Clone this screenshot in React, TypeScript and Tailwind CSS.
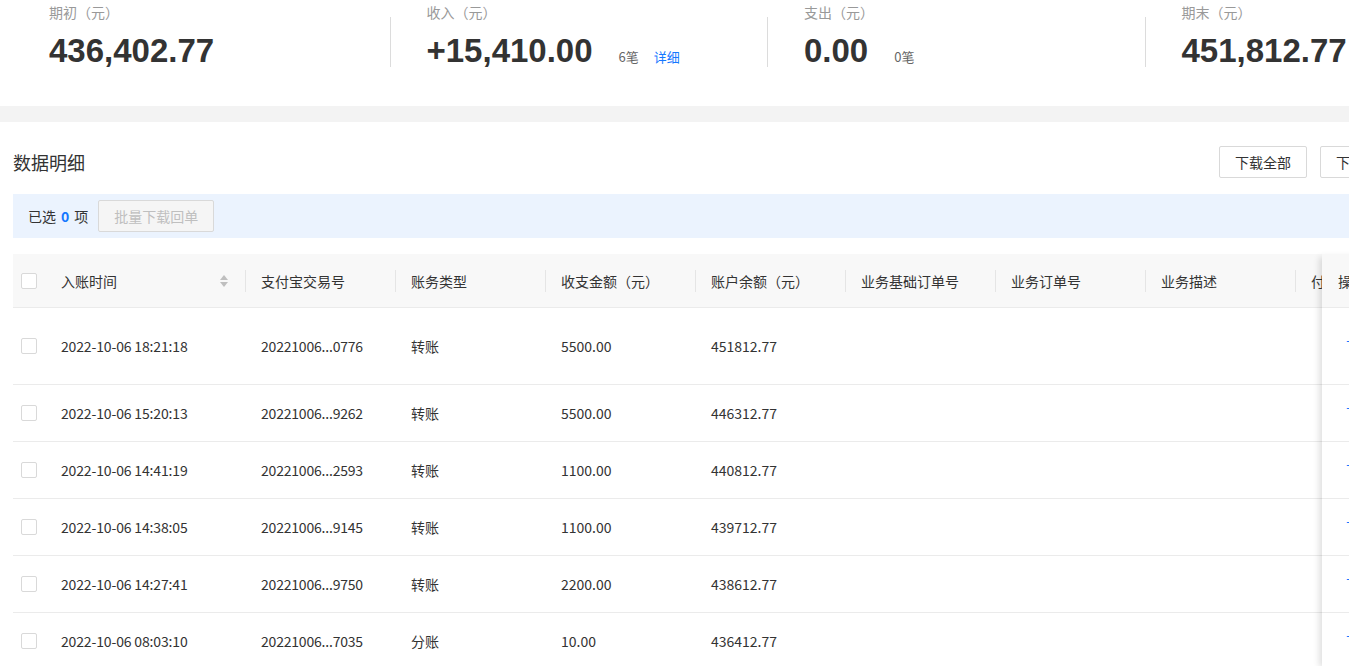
import React from 'react';

const FONT = { fontFamily: '"Noto Sans CJK SC", "Liberation Sans", sans-serif' };
const NUM_FONT = { fontFamily: '"Liberation Sans", "Noto Sans CJK SC", sans-serif' };

interface Stat {
  label: string;
  value: string;
  count?: string;
  detail?: boolean;
}

const STATS: Stat[] = [
  { label: '期初（元）', value: '436,402.77' },
  { label: '收入（元）', value: '+15,410.00', count: '6笔', detail: true },
  { label: '支出（元）', value: '0.00', count: '0笔' },
  { label: '期末（元）', value: '451,812.77' },
];

const COLUMNS = [
  '支付宝交易号',
  '账务类型',
  '收支金额（元）',
  '账户余额（元）',
  '业务基础订单号',
  '业务订单号',
  '业务描述',
  '付款备注',
];

const ROWS = [
  { time: '2022-10-06 18:21:18', no: '20221006...0776', type: '转账', amount: '5500.00', balance: '451812.77' },
  { time: '2022-10-06 15:20:13', no: '20221006...9262', type: '转账', amount: '5500.00', balance: '446312.77' },
  { time: '2022-10-06 14:41:19', no: '20221006...2593', type: '转账', amount: '1100.00', balance: '440812.77' },
  { time: '2022-10-06 14:38:05', no: '20221006...9145', type: '转账', amount: '1100.00', balance: '439712.77' },
  { time: '2022-10-06 14:27:41', no: '20221006...9750', type: '转账', amount: '2200.00', balance: '438612.77' },
  { time: '2022-10-06 08:03:10', no: '20221006...7035', type: '分账', amount: '10.00', balance: '436412.77' },
];

const Checkbox = () => (
  <span className="block w-4 h-4 rounded-[2px] border border-[#d9d9d9] bg-white" />
);

const SortIcon = () => (
  <svg width="10" height="14" viewBox="0 0 10 14" className="text-[#bfbfbf]">
    <path d="M5 1 L9 6 H1 Z" fill="currentColor" />
    <path d="M5 13 L9 8 H1 Z" fill="currentColor" />
  </svg>
);

export default function App() {
  return (
    <div className="w-[1349px] h-[666px] overflow-hidden bg-white text-[#333]" style={FONT}>
      {/* Summary */}
      <div className="flex h-[106px] pl-[12px]">
        {STATS.map((s, i) => (
          <div key={s.label} className="flex w-[377.5px] shrink-0">
            {i > 0 ? (
              <div className="w-px h-[50px] mt-[17px] bg-[#dcdcdc] shrink-0" />
            ) : (
              <div className="w-px shrink-0" />
            )}
            <div className="pl-[36px] pt-[2px]">
              <div className="text-sm leading-5 text-[#999] whitespace-nowrap">{s.label}</div>
              <div className="flex items-baseline mt-[9px] whitespace-nowrap">
                <span className="text-[33px] leading-[40px] font-bold text-[#333]" style={NUM_FONT}>
                  {s.value}
                </span>
                {s.count && <span className="ml-[26px] text-[13px] text-[#666]">{s.count}</span>}
                {s.detail && <span className="ml-[15px] text-[13px] text-[#1677ff]">详细</span>}
              </div>
            </div>
          </div>
        ))}
      </div>

      <div className="h-4 bg-[#f3f3f3]" />

      {/* Detail */}
      <div className="w-[1421px] px-[13px] pt-6">
        <div className="flex items-center justify-between h-8">
          <h2 className="text-lg text-[#333]">数据明细</h2>
          <div className="flex gap-[13px]">
            <button className="w-[88px] h-8 border border-[#d9d9d9] rounded-[2px] text-sm text-[#333] bg-white">
              下载全部
            </button>
            <button className="w-[88px] h-8 border border-[#d9d9d9] rounded-[2px] text-sm text-[#333] bg-white">
              下载回单
            </button>
          </div>
        </div>

        <div className="mt-4 h-11 bg-[#ebf3fe] flex items-center pl-[15px] text-sm">
          <span>已选</span>
          <span className="mx-[5px] font-bold text-[#1677ff]">0</span>
          <span>项</span>
          <button className="ml-[10px] w-[116px] h-8 border border-[#d9d9d9] rounded-[2px] bg-[#f5f5f5] text-[#bfbfbf]">
            批量下载回单
          </button>
        </div>

        {/* Table */}
        <div className="mt-4 flex">
          <div className="w-[1309px] overflow-hidden shrink-0">
            <div className="w-[1582px]">
              <div className="flex h-[54px] items-center bg-[#f8f8f8] border-b border-[#ebebeb] text-sm">
                <div className="w-8 pl-2 shrink-0">
                  <Checkbox />
                </div>
                <div className="w-[200px] shrink-0 flex items-center justify-between pl-4 pr-4">
                  <span>入账时间</span>
                  <SortIcon />
                </div>
                {COLUMNS.map((c) => (
                  <div key={c} className="w-[150px] shrink-0 flex items-center">
                    <span className="w-px h-[22px] bg-[#e5e5e5]" />
                    <span className="pl-[15px] whitespace-nowrap">{c}</span>
                  </div>
                ))}
              </div>
              {ROWS.map((r, i) => (
                <div
                  key={r.time}
                  className={`flex items-center border-b border-[#ebebeb] text-sm ${i === 0 ? 'h-[77px]' : 'h-[57px]'}`}
                >
                  <div className="w-8 pl-2 shrink-0">
                    <Checkbox />
                  </div>
                  <div className="w-[200px] shrink-0 pl-4 tracking-[-0.15px]">{r.time}</div>
                  <div className="w-[150px] shrink-0 pl-4 tracking-[-0.2px]">{r.no}</div>
                  <div className="w-[150px] shrink-0 pl-4">{r.type}</div>
                  <div className="w-[150px] shrink-0 pl-4">{r.amount}</div>
                  <div className="w-[150px] shrink-0 pl-4">{r.balance}</div>
                </div>
              ))}
            </div>
          </div>

          {/* Fixed action column */}
          <div className="w-[86px] shrink-0 relative z-10 bg-white shadow-[-6px_0_6px_-3px_rgba(0,0,0,0.12)]">
            <div className="h-[54px] flex items-center bg-[#f8f8f8] border-b border-[#ebebeb] pl-4 text-sm whitespace-nowrap">
              操作
            </div>
            {ROWS.map((r, i) => (
              <div
                key={r.time}
                className={`flex items-center border-b border-[#ebebeb] pl-6 text-sm text-[#1677ff] whitespace-nowrap ${i === 0 ? 'h-[77px]' : 'h-[57px]'}`}
              >
                下载
              </div>
            ))}
          </div>
        </div>
      </div>
    </div>
  );
}
